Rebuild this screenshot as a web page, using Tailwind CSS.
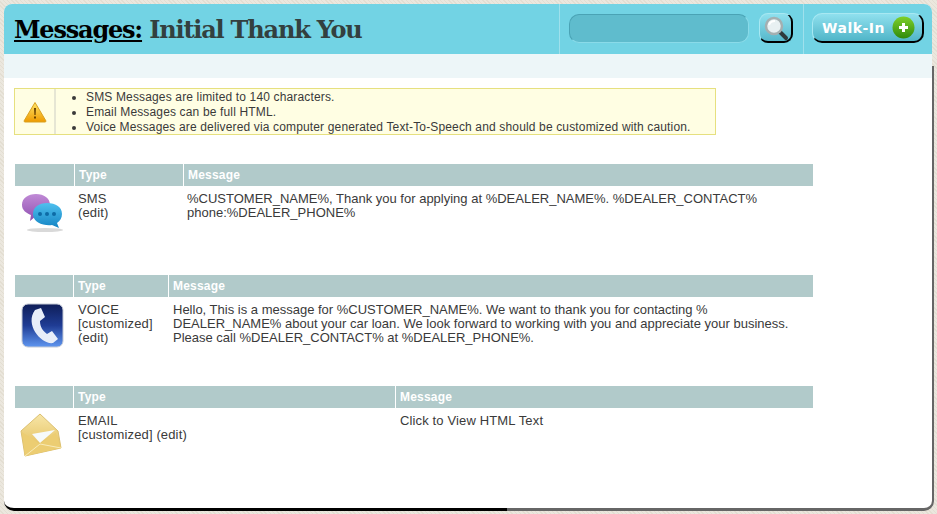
<!DOCTYPE html>
<html lang="en">
<head>
    <meta charset="UTF-8">
    <title>Messages: Initial Thank You</title>
    <script src="https://cdn.jsdelivr.net/npm/@tailwindcss/browser@4"></script>
</head>
<body class="bg-[#e8e4da] bg-[repeating-linear-gradient(45deg,#ebe7de_0px,#ebe7de_2px,#e3ded2_2px,#e3ded2_3px)] w-[937px] h-[514px] overflow-hidden font-['Liberation_Sans',sans-serif] text-[13px] leading-[14px] text-[#3a3a3a]">

    <div class="ml-[4px] mt-[4px] w-[930px] h-[507px] relative">
    <div class="w-[928px] h-[506px] bg-white rounded-t-[8px] rounded-b-[10px] overflow-hidden">

        <!-- header -->
        <div class="h-[50px] bg-[#72d3e4] flex">
            <h1 class="w-[555px] pl-[10px] pt-[10px] font-['DejaVu_Serif',serif] font-bold text-[24px] leading-[32px] text-[#33403f] tracking-[-1.2px] whitespace-nowrap">
                <a href="#" class="text-black underline">Messages:</a> Initial Thank You
            </h1>
            <div class="w-[244px] flex items-center border-l border-[#9fe0ec] pl-[9px] pb-[2px]">
                <input class="w-[180px] h-[29px] rounded-[10px] bg-[#5fbccd] border border-[#4aa3b5] border-b-[#8adbe9] border-r-[#8adbe9]" type="text">
                <button class="ml-[10px] w-[34px] h-[30px] rounded-[9px] bg-linear-to-b from-[#8fe0ee] to-[#55b8cb] border border-[#a8e8f2] border-b-2 border-r-2 border-b-black border-r-black flex items-center justify-center">
                    <svg width="26" height="26" viewBox="0 0 26 26">
                        <path d="M16 16l7 7" stroke="#2f3a3d" stroke-width="4" stroke-linecap="round"/>
                        <circle cx="11" cy="11" r="8" fill="#e8f0f2" stroke="#a4afb1" stroke-width="2.500"/>
                        <path d="M6 10c1-3 3-4 6-4" stroke="#fff" stroke-width="2" fill="none"/>
                    </svg>
                </button>
            </div>
            <div class="flex-1 flex items-center border-l border-[#9fe0ec] pl-[8px] pb-[2px]">
                <button class="w-[112px] h-[30px] rounded-[10px] bg-linear-to-b from-[#8fe0ee] to-[#4fb5c8] border border-[#a8e8f2] border-b-2 border-r-2 border-b-black border-r-black flex items-center justify-between pl-[9px] pr-[7px] text-white font-['DejaVu_Sans',sans-serif] font-bold text-[14px] tracking-[0.5px]">
                    Walk-In
                    <svg width="23" height="23" viewBox="0 0 23 23">
                        <defs><linearGradient id="plus" x1="0" y1="0" x2="0" y2="1"><stop offset="0" stop-color="#7fd02a"/><stop offset="1" stop-color="#2f8a0c"/></linearGradient></defs>
                        <circle cx="11.500" cy="11.500" r="11" fill="url(#plus)"/>
                        <path d="M11.500 7v9M7 11.500h9" stroke="#fff" stroke-width="3"/>
                    </svg>
                </button>
            </div>
        </div>
        <div class="h-[24px] bg-[#edf6f8]"></div>

        <!-- notice -->
        <div class="mt-[10px] ml-[10px] w-[702px] h-[47px] bg-[#fffee3] border border-[#e6e07f] flex text-[12px] tracking-[0.15px]">
            <div class="w-[41px] border-r-2 border-[#e6e6d4] flex items-center justify-center">
                <svg width="24" height="22" viewBox="0 0 24 22">
                    <defs><linearGradient id="warn" x1="0" y1="0" x2="0" y2="1"><stop offset="0" stop-color="#ffe66a"/><stop offset="1" stop-color="#ee9a00"/></linearGradient></defs>
                    <path d="M12 1.500L23 20a1 1 0 0 1-1 1H2a1 1 0 0 1-1-1z" fill="url(#warn)" stroke="#d9a020" stroke-linejoin="round"/>
                    <path d="M11 7h2l-.4 7h-1.200zM11 15.500h2v2h-2z" fill="#6b4300"/>
                </svg>
            </div>
            <ul class="list-disc pl-[30px] pt-[1px] leading-[15px]">
                <li>SMS Messages are limited to 140 characters.</li>
                <li>Email Messages can be full HTML.</li>
                <li>Voice Messages are delivered via computer generated Text-To-Speech and should be customized with caution.</li>
            </ul>
        </div>

        <!-- sms -->
        <div class="mt-[29px] ml-[11px] w-[798px] h-[111px]">
            <div class="h-[22px] bg-[#b1caca] flex items-center text-white font-bold text-[12px] tracking-[0.2px]">
                <div class="w-[60px] h-full border-r border-white"></div>
                <div class="w-[109px] pl-[4px] h-full leading-[22px] border-r border-white">Type</div>
                <div class="pl-[4px]">Message</div>
            </div>
            <div class="flex pt-[6px]">
                <div class="w-[61px] pl-[6px]">
                    <svg width="42" height="42" viewBox="0 0 42 42" class="-mt-[1px]">
                        <defs>
                            <linearGradient id="purple" x1="0" y1="0" x2="0" y2="1"><stop offset="0" stop-color="#c08ad6"/><stop offset="1" stop-color="#8f4fb0"/></linearGradient>
                            <linearGradient id="sky" x1="0" y1="0" x2="0" y2="1"><stop offset="0" stop-color="#4fc0ee"/><stop offset="1" stop-color="#1484c4"/></linearGradient>
                        </defs>
                        <ellipse cx="24" cy="39" rx="18" ry="2" fill="#d9d9d9"/>
                        <path d="M15 3c8 0 14 4 14 11s-6 11-14 11l-6 5 1-6C5 22 1 19 1 14 1 7 7 3 15 3z" fill="url(#purple)"/>
                        <path d="M26 12c9 0 15 4 15 11 0 4-2 7-5 9l2 5-7-3c-8 1-19-2-19-11 0-7 6-11 14-11z" fill="url(#sky)"/>
                        <circle cx="19" cy="23" r="2" fill="#0d6ba6"/><circle cx="26" cy="23" r="2" fill="#0d6ba6"/><circle cx="33" cy="23" r="2" fill="#0d6ba6"/>
                    </svg>
                </div>
                <div class="w-[109px] pl-[2px] tracking-[0.14px]">SMS<br>(edit)</div>
                <div class="pl-[2px] w-[590px]">%CUSTOMER_NAME%, Thank you for applying at %DEALER_NAME%. %DEALER_CONTACT% phone:%DEALER_PHONE%</div>
            </div>
        </div>

        <!-- voice -->
        <div class="ml-[11px] w-[798px] h-[111px]">
            <div class="h-[22px] bg-[#b1caca] flex items-center text-white font-bold text-[12px] tracking-[0.2px]">
                <div class="w-[59px] h-full border-r border-white"></div>
                <div class="w-[95px] pl-[4px] h-full leading-[22px] border-r border-white">Type</div>
                <div class="pl-[4px]">Message</div>
            </div>
            <div class="flex pt-[6px]">
                <div class="w-[60px] pl-[5px]">
                    <svg width="44" height="46" viewBox="0 0 44 46">
                        <defs><linearGradient id="blue" x1="0" y1="0" x2="0" y2="1"><stop offset="0" stop-color="#0f1e58"/><stop offset="0.5" stop-color="#1f3c94"/><stop offset="1" stop-color="#5f96f0"/></linearGradient></defs>
                        <rect x="2" y="1" width="41" height="43" rx="6" fill="url(#blue)" stroke="#c4cad6"/>
                        <path d="M15 7l6-2 4 9-5 4c0 6 3 10 7 13l5-3 6 8-5 4C22 42 4 22 15 7z" fill="#e8eef9"/>
                    </svg>
                </div>
                <div class="w-[95px] pl-[3px] tracking-[0.14px]">VOICE<br>[customized]<br>(edit)</div>
                <div class="pl-[3px] w-[640px]">Hello, This is a message for %CUSTOMER_NAME%. We want to thank you for contacting %<br>DEALER_NAME% about your car loan. We look forward to working with you and appreciate your business.<br>Please call %DEALER_CONTACT% at %DEALER_PHONE%.</div>
            </div>
        </div>

        <!-- email -->
        <div class="ml-[11px] w-[798px]">
            <div class="h-[22px] bg-[#b1caca] flex items-center text-white font-bold text-[12px] tracking-[0.2px]">
                <div class="w-[59px] h-full border-r border-white"></div>
                <div class="w-[322px] pl-[4px] h-full leading-[22px] border-r border-white">Type</div>
                <div class="pl-[4px]">Message</div>
            </div>
            <div class="flex pt-[6px]">
                <div class="w-[60px] pl-[5px]">
                    <svg width="44" height="46" viewBox="0 0 44 46" class="-mt-[2px]">
                        <defs><linearGradient id="env" x1="0" y1="0" x2="0" y2="1"><stop offset="0" stop-color="#f7e6a8"/><stop offset="1" stop-color="#e0b84e"/></linearGradient></defs>
                        <path d="M20 2L1 19l4 25 36-8-3-17z" fill="url(#env)" stroke="#dcc070" stroke-linejoin="round"/>
                        <path d="M12 22l23-4-15 13z" fill="#f6fafb"/>
                        <path d="M2 20l18 12 18-13-2 2 5 15-36 8z" fill="#eccd72"/>
                        <path d="M5 44l15-12 21 4" fill="none" stroke="#f8ebb8"/>
                    </svg>
                </div>
                <div class="w-[322px] pl-[3px] tracking-[0.14px]">EMAIL<br>[customized] (edit)</div>
                <div class="pl-[3px] tracking-[0.14px]">Click to View HTML Text</div>
            </div>
        </div>
    </div>

    <!-- card edge: dark on the left half, grey on the right -->
    <div class="absolute left-0 bottom-0 w-[503px] h-[14px] rounded-bl-[10px] border-b-[3px] border-black"></div>
    <div class="absolute left-[503px] right-0 top-[62px] bottom-0 rounded-br-[10px] border-b-[3px] border-r-2 border-[#666]"></div>
    </div>
</body>
</html>
